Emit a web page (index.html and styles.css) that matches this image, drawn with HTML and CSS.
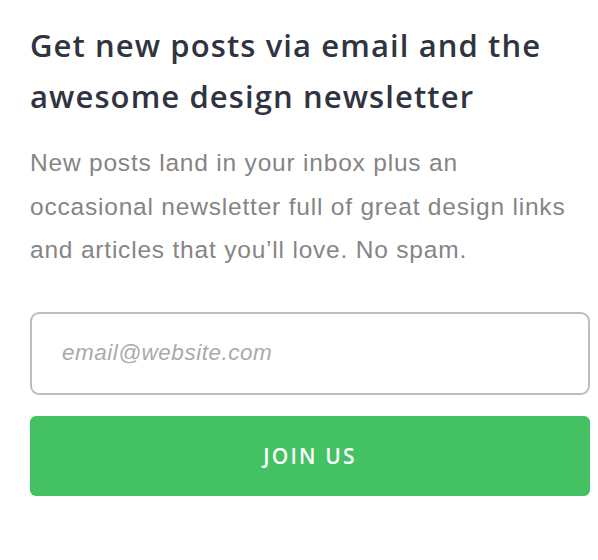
FILE: index.html
```html
<!DOCTYPE html>
<html>
<head>
<meta charset="utf-8">
<link rel="stylesheet" href="styles.css">
</head>
<body>
<div class="signup">
  <h2 class="title">Get new posts via email and the awesome design newsletter</h2>
  <p class="lead">New posts land in your inbox plus an occasional newsletter full of great design links and articles that you’ll love. No spam.</p>
  <form class="form">
    <input class="email" type="email" placeholder="email@website.com">
    <button class="join" type="button">JOIN US</button>
  </form>
</div>
</body>
</html>
```
FILE: styles.css
```css
html, body { margin: 0; padding: 0; background: #fff; }
.signup { padding: 20px 8px 0 30px; }
.title {
  margin: 0;
  width: 560px;
  font-family: "Open Sans", Lato, sans-serif;
  font-weight: 600;
  font-size: 31px;
  line-height: 51px;
  color: #2f3440;
  letter-spacing: 1.1px;
}
.lead {
  margin: 19px 0 0;
  width: 542px;
  font-family: "Liberation Sans", Arial, sans-serif;
  font-size: 24.5px;
  line-height: 43.5px;
  color: #858585;
  letter-spacing: 0.8px;
}
.form { margin-top: 40px; display: flex; flex-direction: column; gap: 21px; }
.email {
  box-sizing: border-box;
  height: 83px;
  width: 560px;
  border: 2px solid #bdbdbd;
  border-radius: 9px;
  padding: 0 30px;
  font-family: "Liberation Sans", Arial, sans-serif;
  font-size: 22.5px;
  font-style: italic;
  letter-spacing: 0.5px;
  outline: none;
}
.email::placeholder { color: #aaaaaa; font-style: italic; }
.join {
  box-sizing: border-box;
  height: 80px;
  width: 560px;
  border: 0;
  border-radius: 6px;
  background: #44c163;
  color: #fff;
  font-family: "Open Sans", Lato, sans-serif;
  font-weight: 600;
  font-size: 21px;
  letter-spacing: 2.2px;
}
```
